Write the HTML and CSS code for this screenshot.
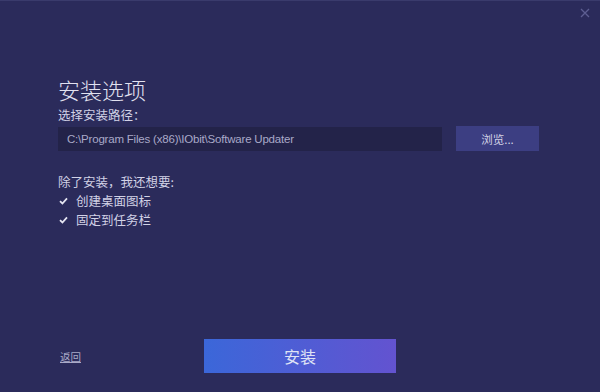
FILE: index.html
```html
<!DOCTYPE html>
<html lang="zh-CN">
<head>
  <meta charset="UTF-8">
  <title>安装选项</title>
  <link rel="stylesheet" href="styles.css">
</head>
<body>
  <div class="window">
    <button class="close" aria-label="关闭">
      <svg width="10" height="10" viewBox="0 0 10 10"><path d="M1 1L9 9M9 1L1 9" stroke="#5d5e92" stroke-width="1.3" fill="none"/></svg>
    </button>

    <div class="content">
      <h1 class="title">安装选项</h1>
      <div class="label path-label">选择安装路径：</div>
      <div class="path-row">
        <div class="path-input">C:\Program Files (x86)\IObit\Software Updater</div>
        <button class="browse">浏览...</button>
      </div>

      <div class="options">
        <div class="label">除了安装，我还想要:</div>
        <label class="check">
          <svg width="9" height="8" viewBox="0 0 9 8"><path d="M1 4.2L3.4 6.5L8 1.3" stroke="#e6e6f2" stroke-width="1.8" fill="none"/></svg>
          <span>创建桌面图标</span>
        </label>
        <label class="check">
          <svg width="9" height="8" viewBox="0 0 9 8"><path d="M1 4.2L3.4 6.5L8 1.3" stroke="#e6e6f2" stroke-width="1.8" fill="none"/></svg>
          <span>固定到任务栏</span>
        </label>
      </div>
    </div>

    <div class="footer">
      <a class="back" href="#">返回</a>
      <button class="install">安装</button>
    </div>
  </div>
</body>
</html>
```

FILE: styles.css
```css
:root {
  --bg: #2b2b5b;
  --field: #232349;
  --text: #d2d2e6;
  --muted: #a9a9c8;
  --button: #3c3e82;
}

body {
  margin: 0;
  background: var(--bg);
  font-family: "Noto Sans", "Noto Sans CJK SC", sans-serif;
  color: var(--text);
}

.window {
  position: relative;
  height: 392px;
  box-sizing: border-box;
  border-top: 1px solid #3a3b6c;
  display: flex;
  flex-direction: column;
}

.close {
  position: absolute;
  top: 7px;
  right: 10px;
  padding: 0;
  background: none;
  border: none;
  line-height: 0;
  cursor: pointer;
}

.content {
  padding: 72px 61px 0 58px;
}

.title {
  margin: 0;
  font-family: "Noto Sans CJK SC", sans-serif;
  font-weight: 300;
  font-size: 22px;
  line-height: 32px;
  color: #e2e2f0;
}

.label {
  font-family: "Noto Sans CJK SC", sans-serif;
  font-size: 12.5px;
  line-height: 18px;
  color: var(--text);
}

.path-label {
  margin-top: 2px;
  line-height: 16px;
}

.path-row {
  display: flex;
  align-items: center;
  gap: 14px;
  margin-top: 3px;
}

.path-input {
  flex: 1;
  height: 24px;
  line-height: 24px;
  padding: 0 9px;
  background: var(--field);
  font-family: "Liberation Sans", sans-serif;
  font-size: 11.5px;
  letter-spacing: -0.2px;
  color: var(--muted);
  white-space: nowrap;
}

.browse {
  width: 83px;
  height: 25px;
  padding: 0;
  background: var(--button);
  border: none;
  color: var(--text);
  font-family: "Noto Sans CJK SC", sans-serif;
  font-size: 11.5px;
  cursor: pointer;
}

.options {
  margin-top: 22px;
  display: flex;
  flex-direction: column;
  gap: 1px;
}

.check {
  display: flex;
  align-items: center;
  gap: 8px;
  padding-left: 1px;
  font-family: "Noto Sans CJK SC", sans-serif;
  font-size: 12.5px;
  line-height: 18px;
  color: var(--text);
}

.footer {
  margin-top: auto;
  padding-bottom: 19px;
  display: grid;
  grid-template-columns: 1fr 192px 1fr;
  align-items: center;
}

.back {
  padding-left: 60px;
  font-family: "Noto Sans CJK SC", sans-serif;
  font-size: 10.5px;
  color: var(--muted);
}

.install {
  height: 34px;
  padding: 0;
  border: none;
  background: linear-gradient(90deg, #3b67d9, #6353d0);
  color: #dfe2f5;
  font-family: "Noto Sans CJK SC", sans-serif;
  font-size: 16px;
  cursor: pointer;
}
```
